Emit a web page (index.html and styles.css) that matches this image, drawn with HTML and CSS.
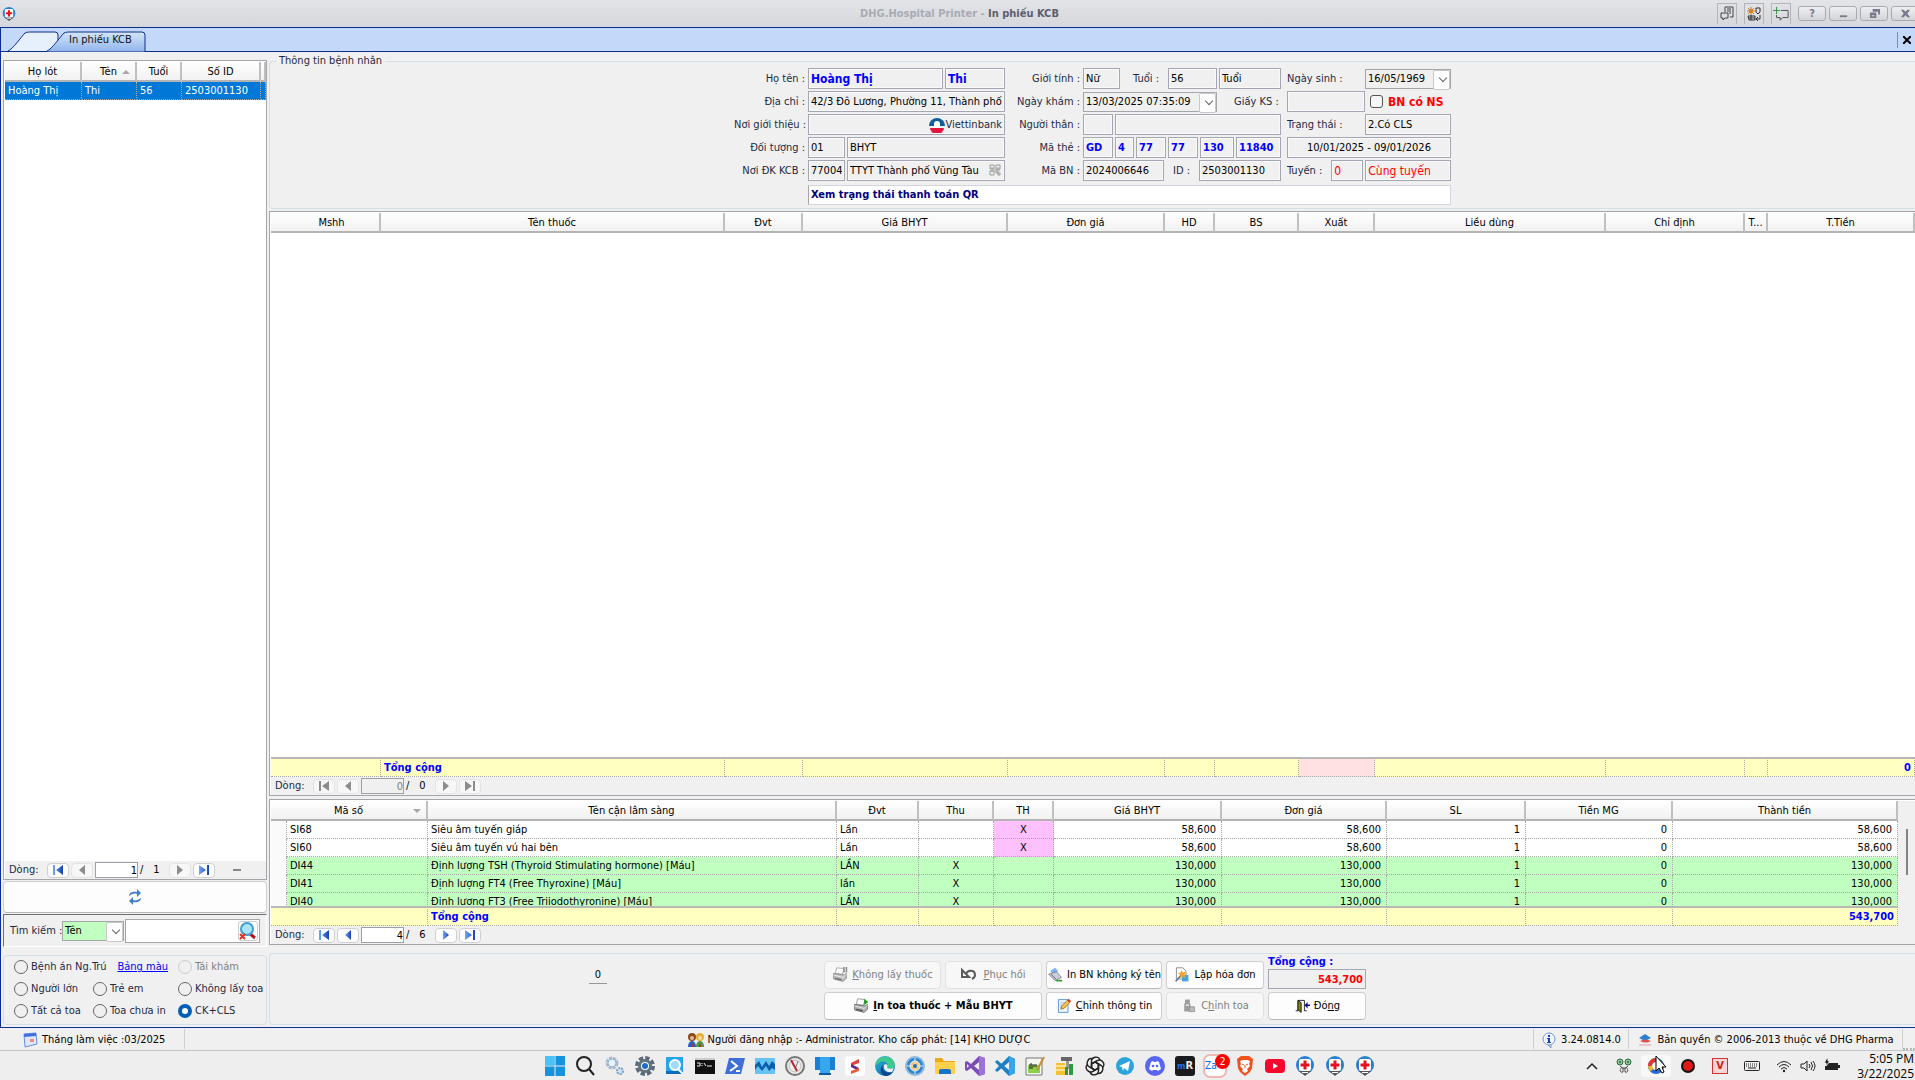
FILE: index.html
```html
<!DOCTYPE html>
<html lang="vi">
<head>
    <meta charset="UTF-8">
    <meta name="viewport" content="width=device-width, initial-scale=1.0">
    <title>DHG.Hospital Printer - In phiếu KCB</title>
    <link rel="stylesheet" href="styles.css">
</head>
<body>
    <svg class="defs" aria-hidden="true">
        <defs>
            <linearGradient id="blueArrow" x1="0" x2="1"><stop offset="0" stop-color="#6fa8f5"/><stop offset="1" stop-color="#1440b4"/></linearGradient>
            <linearGradient id="edgeFill" x1="0" y1="0" x2="1" y2="1"><stop offset="0" stop-color="#2bb7e0"/><stop offset="1" stop-color="#0c59a4"/></linearGradient>
            <symbol id="first" viewBox="0 0 14 12"><path d="M2 1h2v10H2zM12 1v10L5 6z"/></symbol>
            <symbol id="prev" viewBox="0 0 14 12"><path d="M10 1v10L4 6z"/></symbol>
            <symbol id="next" viewBox="0 0 14 12"><path d="M4 1v10l6-5z"/></symbol>
            <symbol id="last" viewBox="0 0 14 12"><path d="M2 1v10l7-5zM10 1h2v10h-2z"/></symbol>
            <symbol id="hospital" viewBox="0 0 20 20">
                <circle cx="10" cy="9" r="9" fill="#2a7fd0"/>
                <path d="M4 15l6 5 6-5z" fill="#555"/>
                <rect x="4" y="3" width="12" height="12" rx="2" fill="#fff"/>
                <path d="M8.500 4.500h3v3h3v3h-3v3h-3v-3h-3v-3h3z" fill="#e8101c"/>
                <path d="M7 16h6v1H7z" fill="#fff"/>
            </symbol>
            <symbol id="printer" viewBox="0 0 20 20">
                <path d="M6 1l9 1-2 7-9-1z" fill="#fff" stroke="#888"/>
                <path d="M2 8l13 2 3-2v6l-4 4-12-3z" fill="#b5b5b5" stroke="#666"/>
                <path d="M2 10l12 3 4-4" fill="none" stroke="#eee"/>
                <path d="M4 14l8 2" stroke="#555" stroke-width="2"/>
            </symbol>
        </defs>
    </svg>

    <header class="titlebar">
        <svg class="app-icon"><use href="#hospital"/></svg>
        <h1><span>DHG.Hospital Printer - </span>In phiếu KCB</h1>
        <div class="window-tools">
            <button class="tool" aria-label="Chat">
                <svg viewBox="0 0 16 16"><path d="M6 6V1h8v10h-3M8 3h4M8 5h4M10 7h2M2 7h7v5H6l-2 2v-2H2z" fill="none" stroke="#444"/></svg>
            </button>
            <button class="tool" aria-label="Ngôn ngữ">
                <svg viewBox="0 0 16 16"><path d="M5 1v8M1 5h8M2 2l6 6M8 2L2 8" stroke="#d08020"/><circle cx="5" cy="5" r="2" fill="#d08020"/><path d="M2 10h7v4H3zM2 12h7M5 9v5M10 2h4v4l-2 2-2-2zM14 9v4h-3M12 11l-2 2 2 2" fill="none" stroke="#333"/></svg>
            </button>
            <button class="tool" aria-label="Ghi chú">
                <svg viewBox="0 0 18 16"><path d="M4 0v8M0 4h8" stroke="#2c8a3a"/><path d="M9 4h8v8h-6l-3 3v-3H4V9" fill="none" stroke="#444"/></svg>
            </button>
            <button class="win" aria-label="Trợ giúp">?</button>
            <button class="win" aria-label="Thu nhỏ"><svg viewBox="0 0 12 12"><path d="M2 8h8v2H2z"/></svg></button>
            <button class="win" aria-label="Khôi phục"><svg viewBox="0 0 12 12"><path d="M4 1h8v6h-2V4H4zM1 5h7v6H1zM3 8v1h3V8z" fill-rule="evenodd"/></svg></button>
            <button class="win" aria-label="Thoát"><svg viewBox="0 0 12 12"><path d="M1 2h3l2 2 2-2h3L8 6l3 4H8L6 8l-2 2H1l3-4z"/></svg></button>
        </div>
    </header>

    <nav class="tabs">
        <svg class="tab-shapes" viewBox="0 0 146 24">
            <defs>
                <linearGradient id="tabOn" x1="0" y1="0" x2="0" y2="1"><stop offset="0" stop-color="#d5e5fa"/><stop offset="1" stop-color="#8fb4ea"/></linearGradient>
            </defs>
            <path d="M7 23C12 21 20 9 24 5c2-1 4-1 6-1h24q3 0 3 3v16" fill="#e6effc" stroke="#0a2f8c"/>
            <path d="M46 23C51 21 59 9 63 5c2-1 4-1 6-1h72q3 0 3 3v17H46z" fill="url(#tabOn)" stroke="#0a2f8c"/>
        </svg>
        <a class="tab-label" href="#">In phiếu KCB</a>
        <button class="tab-close" aria-label="Đóng tab"><svg viewBox="0 0 8 8"><path d="M0 0l8 8M8 0L0 8" stroke="#000" stroke-width="2"/></svg></button>
    </nav>

    <main class="workspace">
        <aside class="sidebar">
            <div class="grid-panel patients">
                <table>
                    <colgroup><col class="w77"><col class="w55"><col class="w45"><col class="w79"><col></colgroup>
                    <thead>
                        <tr><th>Họ lót</th><th>Tên<i class="sort up"></i></th><th>Tuổi</th><th>Số ID</th><th></th></tr>
                    </thead>
                    <tbody>
                        <tr class="selected"><td>Hoàng Thị</td><td>Thi</td><td>56</td><td>2503001130</td><td></td></tr>
                    </tbody>
                </table>
                <div class="blank"></div>
                <div class="pager">
                    <label for="row1">Dòng:</label>
                    <button aria-label="Đầu"><svg><use href="#first"/></svg></button>
                    <button disabled aria-label="Trước"><svg><use href="#prev"/></svg></button>
                    <input type="text" id="row1" value="1">
                    <span>/</span><span class="count">1</span>
                    <button disabled aria-label="Sau"><svg><use href="#next"/></svg></button>
                    <button aria-label="Cuối"><svg><use href="#last"/></svg></button>
                    <i class="dash"></i>
                </div>
            </div>
            <button class="btn refresh" aria-label="Làm mới">
                <svg viewBox="0 0 16 16"><path d="M2 7c0-4 5-5 8-4V0l4 4-4 4V5C7 4 5 5 2 7zM14 9c0 4-5 5-8 4v3l-4-4 4-4v3c3 1 5 0 8-2z" fill="#3f7fd0"/></svg>
            </button>
            <div class="search">
                <label for="field">Tìm kiếm :</label>
                <span class="combo green"><select id="field"><option>Tên</option></select></span>
                <span class="search-box">
                    <input type="text" aria-label="Từ khóa">
                    <button aria-label="Xóa tìm kiếm">
                        <svg viewBox="0 0 18 18"><path d="M10 11l6 5" stroke="#b01818" stroke-width="3"/><circle cx="8" cy="7" r="6" fill="#a8e4f8" stroke="#3f9bd0" stroke-width="2"/><path d="M1 12l5 5M6 12l-5 5" stroke="#e03020" stroke-width="2"/></svg>
                    </button>
                </span>
            </div>
            <fieldset class="filters">
                <label><input type="radio" name="filter">Bệnh án Ng.Trú</label>
                <a href="#">Bảng màu</a>
                <label class="off"><input type="radio" name="filter" disabled>Tái khám</label>
                <label><input type="radio" name="filter">Người lớn</label>
                <label><input type="radio" name="filter">Trẻ em</label>
                <label><input type="radio" name="filter">Không lấy toa</label>
                <label><input type="radio" name="filter">Tất cả toa</label>
                <label><input type="radio" name="filter">Toa chưa in</label>
                <label><input type="radio" name="filter" checked>CK+CLS</label>
            </fieldset>
        </aside>

        <section class="content">
            <fieldset class="patient-info">
                <legend>Thông tin bệnh nhân</legend>
                <div class="info-grid">
                    <label for="hoten">Họ tên :</label>
                    <div class="fields">
                        <input class="name grow" id="hoten" value="Hoàng Thị" readonly>
                        <input class="name f59" value="Thi" aria-label="Tên" readonly>
                    </div>
                    <label for="gioitinh">Giới tính :</label>
                    <div class="fields">
                        <input class="f36" id="gioitinh" value="Nữ" readonly>
                        <label class="grow" for="tuoi">Tuổi :</label>
                        <input class="f49" id="tuoi" value="56" readonly>
                        <input class="f62" value="Tuổi" aria-label="Đơn vị tuổi" readonly>
                    </div>
                    <div class="fields third">
                        <label class="grow" for="ngaysinh">Ngày sinh :</label>
                        <span class="combo f86"><select id="ngaysinh"><option>16/05/1969</option></select></span>
                    </div>

                    <label for="diachi">Địa chỉ :</label>
                    <div class="fields"><input class="grow" id="diachi" value="42/3 Đô Lương, Phường 11, Thành phố" readonly></div>
                    <label for="ngaykham">Ngày khám :</label>
                    <div class="fields">
                        <span class="combo f134"><select id="ngaykham"><option>13/03/2025 07:35:09</option></select></span>
                        <label class="ks" for="giayks">Giấy KS :</label>
                    </div>
                    <div class="fields third">
                        <input class="f78" id="giayks" readonly>
                        <label class="newborn"><input type="checkbox">BN có NS</label>
                    </div>

                    <label for="noigt">Nơi giới thiệu :</label>
                    <div class="fields bank">
                        <input class="grow" id="noigt" value="Viettinbank" readonly>
                        <svg viewBox="0 0 16 16"><path d="M0 9a8 8 0 0 1 16 0z" fill="#0f5f9f"/><path d="M1 11a7 6 0 0 0 14 0z" fill="#e3173e"/><path d="M8 4a3 3 0 0 1 3 3v2l2 2H3l2-2V7a3 3 0 0 1 3-3z" fill="#fff"/></svg>
                    </div>
                    <label for="nguoithan">Người thân :</label>
                    <div class="fields"><input class="f30" id="nguoithan" readonly><input class="grow" aria-label="Tên người thân" readonly></div>
                    <div class="fields third">
                        <label class="grow" for="trangthai">Trạng thái :</label>
                        <input class="f86" id="trangthai" value="2.Có CLS" readonly>
                    </div>

                    <label for="doituong">Đối tượng :</label>
                    <div class="fields"><input class="f36" id="doituong" value="01" readonly><input class="grow" value="BHYT" aria-label="Loại" readonly></div>
                    <label for="mathe">Mã thẻ :</label>
                    <div class="fields card">
                        <input class="f30" id="mathe" value="GD" readonly>
                        <input class="f19" value="4" aria-label="Mã thẻ 2" readonly>
                        <input class="f30" value="77" aria-label="Mã thẻ 3" readonly>
                        <input class="f30" value="77" aria-label="Mã thẻ 4" readonly>
                        <input class="f34" value="130" aria-label="Mã thẻ 5" readonly>
                        <input class="grow" value="11840" aria-label="Mã thẻ 6" readonly>
                    </div>
                    <div class="fields third"><input class="grow center" value="10/01/2025 - 09/01/2026" aria-label="Hạn thẻ" readonly></div>

                    <label for="noidk">Nơi ĐK KCB :</label>
                    <div class="fields qr">
                        <input class="f36" id="noidk" value="77004" readonly>
                        <input class="grow" value="TTYT Thành phố Vũng Tàu" aria-label="Tên nơi ĐK" readonly>
                        <svg viewBox="0 0 12 12"><path d="M1 1h4v4H1zM7 1h4v4H7zM1 7h4v4H1zM7 7h2v2H7zM9 9h2v2H9zM3 3v5M9 3v2M5 6h6" fill="none" stroke="#999"/></svg>
                    </div>
                    <label for="mabn">Mã BN :</label>
                    <div class="fields">
                        <input class="f80" id="mabn" value="2024006646" readonly>
                        <label class="grow" for="idbn">ID :</label>
                        <input class="f82" id="idbn" value="2503001130" readonly>
                    </div>
                    <div class="fields third">
                        <label class="grow" for="tuyen">Tuyến :</label>
                        <input class="red f32" id="tuyen" value="0" readonly>
                        <input class="red f86" value="Cùng tuyến" aria-label="Tên tuyến" readonly>
                    </div>

                    <a class="qr-link" href="#">Xem trạng thái thanh toán QR</a>
                </div>
            </fieldset>

            <div class="grid-panel drugs">
                <table>
                    <colgroup><col class="w110"><col class="w344"><col class="w78"><col class="w205"><col class="w157"><col class="w50"><col class="w84"><col class="w76"><col class="w231"><col class="w139"><col class="w23"><col></colgroup>
                    <thead>
                        <tr><th class="indent">Mshh</th><th>Tên thuốc</th><th>Đvt</th><th>Giá BHYT</th><th>Đơn giá</th><th>HD</th><th>BS</th><th>Xuất</th><th>Liều dùng</th><th>Chỉ định</th><th>T...</th><th>T.Tiền</th></tr>
                    </thead>
                    <tbody><tr><td colspan="12"></td></tr></tbody>
                    <tfoot>
                        <tr><td></td><td>Tổng cộng</td><td></td><td></td><td></td><td></td><td></td><td class="rose"></td><td></td><td></td><td></td><td class="num">0</td></tr>
                    </tfoot>
                </table>
                <div class="pager">
                    <label for="row2">Dòng:</label>
                    <button disabled aria-label="Đầu"><svg><use href="#first"/></svg></button>
                    <button disabled aria-label="Trước"><svg><use href="#prev"/></svg></button>
                    <input type="text" id="row2" value="0" disabled>
                    <span>/</span><span class="count">0</span>
                    <button disabled aria-label="Sau"><svg><use href="#next"/></svg></button>
                    <button disabled aria-label="Cuối"><svg><use href="#last"/></svg></button>
                </div>
            </div>

            <div class="grid-panel tests">
                <div class="test-area">
                    <div class="test-tables">
                        <div class="test-rows">
                            <table>
                                <colgroup><col class="w16"><col class="w141"><col class="w409"><col class="w82"><col class="w75"><col class="w60"><col class="w168"><col class="w165"><col class="w139"><col class="w147"><col></colgroup>
                                <thead>
                                    <tr><th colspan="2">Mã số<i class="sort down"></i></th><th>Tên cận lâm sàng</th><th>Đvt</th><th>Thu</th><th>TH</th><th>Giá BHYT</th><th>Đơn giá</th><th>SL</th><th>Tiền MG</th><th>Thành tiền</th></tr>
                                </thead>
                                <tbody>
                                    <tr><td></td><td>SI68</td><td>Siêu âm tuyến giáp</td><td>Lần</td><td></td><td class="pink">X</td><td>58,600</td><td>58,600</td><td>1</td><td>0</td><td>58,600</td></tr>
                                    <tr><td></td><td>SI60</td><td>Siêu âm tuyến vú hai bên</td><td>Lần</td><td></td><td class="pink">X</td><td>58,600</td><td>58,600</td><td>1</td><td>0</td><td>58,600</td></tr>
                                    <tr class="lime"><td></td><td>DI44</td><td>Định lượng TSH (Thyroid Stimulating hormone) [Máu]</td><td>LẦN</td><td>X</td><td></td><td>130,000</td><td>130,000</td><td>1</td><td>0</td><td>130,000</td></tr>
                                    <tr class="lime"><td></td><td>DI41</td><td>Định lượng FT4 (Free Thyroxine) [Máu]</td><td>lần</td><td>X</td><td></td><td>130,000</td><td>130,000</td><td>1</td><td>0</td><td>130,000</td></tr>
                                    <tr class="lime"><td></td><td>DI40</td><td>Định lượng FT3 (Free Triiodothyronine) [Máu]</td><td>LẦN</td><td>X</td><td></td><td>130,000</td><td>130,000</td><td>1</td><td>0</td><td>130,000</td></tr>
                                </tbody>
                            </table>
                        </div>
                        <table class="totals">
                            <colgroup><col class="w16"><col class="w141"><col class="w409"><col class="w82"><col class="w75"><col class="w60"><col class="w168"><col class="w165"><col class="w139"><col class="w147"><col></colgroup>
                            <tfoot>
                                <tr><td colspan="2"></td><td>Tổng cộng</td><td></td><td></td><td></td><td></td><td></td><td></td><td></td><td class="num">543,700</td></tr>
                            </tfoot>
                        </table>
                    </div>
                    <div class="scrollbar"><i></i></div>
                </div>
                <div class="pager">
                    <label for="row3">Dòng:</label>
                    <button aria-label="Đầu"><svg><use href="#first"/></svg></button>
                    <button aria-label="Trước"><svg><use href="#prev"/></svg></button>
                    <input type="text" id="row3" value="4">
                    <span>/</span><span class="count">6</span>
                    <button aria-label="Sau"><svg><use href="#next"/></svg></button>
                    <button aria-label="Cuối"><svg><use href="#last"/></svg></button>
                </div>
            </div>

            <div class="actions">
                <span class="counter">0</span>
                <div class="action-grid">
                    <button class="btn" disabled><svg viewBox="0 0 20 20"><use href="#printer"/><path d="M15 0v7M18 0v7" stroke="#777" stroke-width="2"/></svg><span><u>K</u>hông lấy thuốc</span></button>
                    <button class="btn undo" disabled><svg viewBox="0 0 16 16"><path d="M1 3v7h7zM5 7c2-5 9-4 9 1 0 2-1 3-3 4" fill="none" stroke="#333" stroke-width="2"/></svg><span><u>P</u>hục hồi</span></button>
                    <button class="btn"><svg viewBox="0 0 20 20"><path d="M4 5l6-4 4 4-6 5z" fill="#7db4f0"/><path d="M2 9l10-3 6 7-8 4z" fill="#c9cdd8" stroke="#778"/><path d="M10 16h9v2h-7z" fill="#3a9a3a"/><path d="M5 9l6 6" stroke="#447"/></svg><span>In BN không ký tên</span></button>
                    <button class="btn"><svg viewBox="0 0 20 20"><path d="M3 1h8l4 4v10H3z" fill="#fff" stroke="#777"/><path d="M10 10h8v8h-8z" fill="#49a4dc"/><path d="M2 18l8-9" stroke="#777" stroke-width="2"/><path d="M9 4l2 3 4-1-2 4 2 3-4-1-3 2V10L5 8l3-1z" fill="#f2a326"/></svg><span>Lập hóa đơn</span></button>
                    <div class="total">
                        <label for="total">Tổng cộng :</label>
                        <input id="total" value="543,700" readonly>
                    </div>
                    <button class="btn primary"><svg viewBox="0 0 20 20"><use href="#printer"/><path d="M14 1l5 4-5 4z" fill="#1c9a1c"/></svg><span><u>I</u>n toa thuốc + Mẫu BHYT</span></button>
                    <button class="btn"><svg viewBox="0 0 20 20"><path d="M3 2h12v16H3z" fill="#eef6ff" stroke="#3c84c8"/><path d="M5 6h7M5 9h6M5 12h7" stroke="#8ab4dc"/><path d="M6 14l1-4 7-7 3 3-7 7z" fill="#f6c14a" stroke="#a66a20"/><path d="M14 3l2-2 3 3-2 2z" fill="#d83a2a"/></svg><span><u>C</u>hỉnh thông tin</span></button>
                    <button class="btn" disabled><svg viewBox="0 0 20 20"><path d="M5 2h6v4l1 3v8H4V8l1-2z" fill="#888"/><path d="M11 11h6v6h-7z" fill="#aaa" stroke="#777"/><path d="M6 9h4" stroke="#ddd" stroke-width="2"/></svg><span>C<u>h</u>ỉnh toa</span></button>
                    <button class="btn"><svg viewBox="0 0 20 20"><path d="M5 16V3h8v13h3M2 16h3" fill="none" stroke="#000"/><path d="M5 3l4 3v12l-4-3z" fill="#8a8a1a" stroke="#000"/><path d="M13 9l4-4v3h3v2h-3v3z" fill="#10108c"/></svg><span>Đó<u>ng</u></span></button>
                </div>
            </div>
        </section>
    </main>

    <footer class="statusbar">
        <div class="cell month">
            <svg viewBox="0 0 16 16"><path d="M2 2l12-1 1 11-12 3z" fill="#dfe8fb" stroke="#6a8fe0"/><path d="M2 2l12-1v3L2 5z" fill="#3f6fe0"/><path d="M8 7h4v3H8z" fill="#f08a80"/></svg>
            Tháng làm việc :03/2025
        </div>
        <div class="cell user">
            <svg viewBox="0 0 16 16"><circle cx="4" cy="5" r="4" fill="#8a4a20"/><path d="M0 15c0-8 8-8 8 0z" fill="#2f5fc0"/><circle cx="12" cy="5" r="4" fill="#e8b030"/><path d="M8 15c0-8 8-8 8 0z" fill="#4a9a4a"/><circle cx="4" cy="6" r="2" fill="#e8b890"/><circle cx="12" cy="6" r="2" fill="#f6d8a8"/><path d="M4 10l1 5H3zM12 10l1 5h-2z" fill="#d02020"/></svg>
            Người đăng nhập :- Administrator. Kho cấp phát: [14] KHO DƯỢC
        </div>
        <div class="cell version">
            <svg viewBox="0 0 16 16"><path d="M8 1a6 6 0 1 1-1 12l3 3V13" fill="#e8f2ff" stroke="#7a9ac8"/><circle cx="8" cy="7" r="6" fill="#eef5ff" stroke="#7a9ac8"/><path d="M7 3h2v2H7zM6 6h3v4h1v1H6v-1h1V7H6z" fill="#1040c0"/></svg>
            3.24.0814.0
        </div>
        <div class="cell rights">
            <svg viewBox="0 0 16 16"><path d="M8 2l6 4-6 3-6-3z" fill="#2f7fd0"/><path d="M3 9q5-3 11 0-5 3-11 0z" fill="#e05050"/><path d="M2 13h12" stroke="#e0a0a0"/></svg>
            Bản quyền © 2006-2013 thuộc về DHG Pharma
        </div>
        <i class="grip"></i>
    </footer>

    <div class="taskbar">
        <div class="task-icons">
            <svg viewBox="0 0 20 20"><path d="M0 0h9.500v9.500H0zM10.500 0H20v9.500h-9.500zM0 10.500h9.500V20H0zM10.500 10.500H20V20h-9.500z" fill="#1793dc"/><path d="M0 0h9.500v9.500H0z" fill="#4cc2f5"/></svg>
            <svg viewBox="0 0 20 20"><circle cx="9" cy="8" r="7" fill="none" stroke="#222" stroke-width="2"/><path d="M14 13l5 6" stroke="#222" stroke-width="2"/></svg>
            <svg viewBox="0 0 20 20"><circle cx="7" cy="7" r="5" fill="none" stroke="#a9bccd" stroke-width="3" stroke-dasharray="3 1"/><circle cx="7" cy="7" r="4" fill="#e7f2fb" stroke="#8fb0cc"/><circle cx="15" cy="15" r="3" fill="#cfe3f4" stroke="#7ea3c4" stroke-width="2" stroke-dasharray="2 1"/></svg>
            <svg viewBox="0 0 20 20"><circle cx="10" cy="10" r="8" fill="none" stroke="#5d6b78" stroke-width="4" stroke-dasharray="4.200 2.080"/><circle cx="10" cy="10" r="7" fill="#64727f"/><circle cx="10" cy="10" r="4" fill="#fff"/><circle cx="10" cy="10" r="3" fill="#1670c8"/></svg>
            <svg viewBox="0 0 20 20"><path d="M1 1h17v17H1z" fill="#27a5ec"/><path d="M1 15h17v3H1z" fill="#0d6db8"/><circle cx="10" cy="9" r="5" fill="#9fdcfb" stroke="#fff" stroke-width="2"/><path d="M13 13l5 5" stroke="#fff" stroke-width="2"/></svg>
            <svg viewBox="0 0 20 20"><path d="M0 2h20v16H0z" fill="#111"/><path d="M0 2h20v2H0z" fill="#ccc"/><path d="M2 7h3v3H2M7 7v1M7 9v1M9 7l2 3M12 10h5" fill="none" stroke="#eee"/></svg>
            <svg viewBox="0 0 20 20"><path d="M4 2h16l-4 16H0z" fill="#3e6fd8"/><path d="M6 5l6 5-7 5M11 15h4" fill="none" stroke="#fff" stroke-width="2"/></svg>
            <svg viewBox="0 0 20 20"><path d="M0 2h20v16H0z" fill="#67c3f2"/><path d="M0 9l4-4 3 6 4-6 3 5 3-5 3 3v6l-3-2-3 3-3-5-4 5-4-5-3 4z" fill="#0a5fae"/></svg>
            <svg viewBox="0 0 20 20"><circle cx="10" cy="10" r="9" fill="#eee" stroke="#777" stroke-width="2"/><circle cx="10" cy="10" r="6" fill="none" stroke="#bbb"/><path d="M6 4l6 11" stroke="#b02a2a" stroke-width="2"/><path d="M13 5l-2 6" stroke="#777"/></svg>
            <svg viewBox="0 0 20 20"><path d="M0 1h20v13H0z" fill="#1a7fd0"/><path d="M5 1h10v17H5z" fill="#35a7ee"/><path d="M4 17h12v2H4z" fill="#0d5a9c"/></svg>
            <svg viewBox="0 0 20 20"><rect width="20" height="20" rx="4" fill="#fff"/><path d="M14 3L6 7v3l8-3z" fill="#e8413c"/><path d="M6 8l8 4v3L6 11z" fill="#5b2a86"/><path d="M14 12l-8 3v3l8-3z" fill="#f25a3c"/></svg>
            <svg viewBox="0 0 20 20"><circle cx="10" cy="10" r="10" fill="url(#edgeFill)"/><path d="M1 6c4-8 18-7 19 3 0 4-5 5-8 3 3-4-2-8-7-6-2 1-4 3-5 5z" fill="#3fc98e"/><path d="M8 9c-2 6 4 9 9 7 2-1 0 3-5 4C5 20 4 12 8 9z" fill="#0b478c"/><path d="M9 9c2-2 5 0 3 3 2 1 5 1 7 0l-2 4c-5 1-9-2-8-7z" fill="#eef"/></svg>
            <svg viewBox="0 0 20 20"><circle cx="10" cy="10" r="9" fill="#2f86cf" stroke="#8fb9dc" stroke-width="2"/><circle cx="10" cy="10" r="5" fill="#f1c77a" stroke="#e8eef4"/><path d="M10 2v16M2 10h16" stroke="#dbe8f4"/><circle cx="10" cy="10" r="2" fill="#2f6fae"/></svg>
            <svg viewBox="0 0 20 20"><path d="M0 2h7l2 3h11v13H0z" fill="#eba91a"/><path d="M0 6h20v12H0z" fill="#fccf4d"/><path d="M4 18v-3q0-2 2-2h8q2 0 2 2v3z" fill="#1673c8"/></svg>
            <svg viewBox="0 0 20 20"><path d="M14 0l6 2v16l-6 2L6 12l-4 3-2-1V6l2-1 4 3z" fill="#7b4bb8"/><path d="M14 6v8l-5-4zM2 8v4l2-2z" fill="#eee"/><path d="M14 0l6 2v16l-6 2z" fill="#9b72d6"/></svg>
            <svg viewBox="0 0 20 20"><path d="M14 0l6 3v14l-6 3L2 8 0 6l2-2 12 10V6L2 16l-2-2z" fill="#1d7fc4"/><path d="M14 0l6 3v14l-6 3z" fill="#37a5ec"/></svg>
            <svg viewBox="0 0 20 20"><path d="M1 2h16v17H1z" fill="#f5f7f0" stroke="#777"/><path d="M3 9h12v8H3z" fill="#8ccf4a"/><path d="M5 13V8h2v5M9 8v3M11 8v3" fill="none" stroke="#222"/><path d="M19 1l-7 13" stroke="#c89030" stroke-width="2"/></svg>
            <svg viewBox="0 0 20 20"><path d="M1 7h9v12H1z" fill="#f2c233"/><path d="M1 10h9M1 14h9" stroke="#fff"/><path d="M6 1h11v4H6z" fill="#666"/><path d="M11 5h3v8h-3z" fill="#999"/><path d="M10 11h3v8h-3zM14 8h4v11h-4z" fill="#2c9a3a"/></svg>
            <svg viewBox="0 0 20 20" fill="none" stroke="#222" stroke-width="1.400"><path id="petal" d="M6.500 12V5.500c0-5 7-6 8.500-1.500M6.500 8L10 6l5 3"/><use href="#petal" transform="rotate(60 10 10)"/><use href="#petal" transform="rotate(120 10 10)"/><use href="#petal" transform="rotate(180 10 10)"/><use href="#petal" transform="rotate(240 10 10)"/><use href="#petal" transform="rotate(300 10 10)"/></svg>
            <svg viewBox="0 0 20 20"><circle cx="10" cy="10" r="9" fill="#2da3dc"/><path d="M4 10l11-5-2 10-4-3-1 3-1-4z" fill="#fff"/></svg>
            <svg viewBox="0 0 20 20"><circle cx="10" cy="10" r="10" fill="#5865f2"/><path d="M6 6l2-1 1 1h2l1-1 2 1 2 7-3 2-1-1H8l-1 1-3-2z" fill="#fff"/><circle cx="8" cy="10" r="1.300" fill="#5865f2"/><circle cx="12" cy="10" r="1.300" fill="#5865f2"/></svg>
            <span class="mr"><b>m</b>R</span>
            <span class="zalo">Za<b>2</b></span>
            <svg viewBox="0 0 20 20"><path d="M6 0h8l4 3-1 9-2 4-5 4-5-4-2-4-1-9z" fill="#f4501e"/><path d="M5 5l3-1h4l3 1-1 3 1 2-3 3 1 2-3 2-3-2 1-2-3-3 1-2z" fill="#fff"/><path d="M7 8l2 1M13 8l-2 1M10 9v3" stroke="#f4501e"/></svg>
            <svg viewBox="0 0 20 20"><rect y="3" width="20" height="14" rx="4" fill="#f8062e"/><path d="M8 7v6l5-3z" fill="#fff"/></svg>
            <svg><use href="#hospital"/></svg>
            <svg><use href="#hospital"/></svg>
            <svg><use href="#hospital"/></svg>
        </div>
        <div class="tray">
            <svg viewBox="0 0 16 16"><path d="M3 11l5-5 5 5" fill="none" stroke="#222" stroke-width="1.500"/></svg>
            <svg viewBox="0 0 16 16"><circle cx="4" cy="4" r="3" fill="#8fc49a" stroke="#2c6a3c"/><circle cx="12" cy="4" r="3" fill="#8fc49a" stroke="#2c6a3c"/><circle cx="4" cy="4" r="1" fill="#2c6a3c"/><circle cx="12" cy="4" r="1" fill="#2c6a3c"/><path d="M4 8l4 3 4-3M6 9c-3 3-2 6 1 5V9M10 9c3 3 2 6-1 5V9" fill="none" stroke="#555"/></svg>
            <span class="tray-app">
                <svg viewBox="0 0 16 16"><circle cx="8" cy="8" r="6" fill="none" stroke="#2869d8" stroke-width="4"/><path d="M2 8a6 6 0 0 1 6-6" fill="none" stroke="#e8382c" stroke-width="4"/><path d="M8 2a6 6 0 0 1 5 3" fill="none" stroke="#28a048" stroke-width="4"/><path d="M2 8a6 6 0 0 0 2 4" fill="none" stroke="#f4b820" stroke-width="4"/></svg>
                <svg class="cursor" viewBox="0 0 12 19"><path d="M1 1v15l3-3 3 5 2-1-2-5h4z" fill="#fff" stroke="#000"/></svg>
            </span>
            <svg viewBox="0 0 16 16"><circle cx="8" cy="8" r="7" fill="#111"/><circle cx="8" cy="8" r="5" fill="#e01818"/></svg>
            <span class="vkey">V</span>
            <svg viewBox="0 0 16 16"><rect x="0.500" y="3.500" width="15" height="9" rx="1" fill="none" stroke="#222"/><path d="M2 6h12M2 8h12" stroke="#222" stroke-dasharray="1 1"/><path d="M4 10h8" stroke="#222"/></svg>
            <svg viewBox="0 0 16 16"><path d="M1 7q7-7 14 0M3 9q5-5 10 0M5 11q3-3 6 0" fill="none" stroke="#222"/><circle cx="8" cy="13" r="1.200" fill="#222"/></svg>
            <svg class="sound" viewBox="0 0 16 16"><path d="M1 6h3l3-3v10L4 10H1zM9 6q2 2 0 4M11 4q3 4 0 8M13 3q4 5 0 10" fill="none" stroke="#222"/></svg>
            <svg class="battery" viewBox="0 0 16 16"><path d="M3 5h11v2h2v3h-2v2H1V8h2z" fill="#222"/><path d="M3 0L0 5h2v3l4-5H4V0z" fill="#222" stroke="#eee"/></svg>
            <div class="clock">5:05 PM<br>3/22/2025</div>
        </div>
    </div>
</body>
</html>
```

FILE: styles.css
```css
* {
    box-sizing: border-box;
}

body {
    margin: 0;
    height: 100vh;
    display: flex;
    flex-direction: column;
    overflow: hidden;
    background-color: #f0f0f0;
    color: #000;
    font-family: "DejaVu Sans Condensed", "Noto Sans", sans-serif;
    font-size: 11px;
    line-height: 14px;
}

button, input, select {
    font: inherit;
    color: inherit;
    margin: 0;
    padding: 0;
    border-radius: 0;
    min-width: 0;
}

label {
    color: #1e2a44;
    white-space: nowrap;
}

.defs {
    position: absolute;
    width: 0;
    height: 0;
}

/* title bar */
.titlebar {
    height: 27px;
    flex: none;
    display: grid;
    grid-template-columns: 1fr auto 1fr;
    align-items: center;
    background: linear-gradient(#e3e4e8, #d6d7dc);
}

.app-icon {
    width: 14px;
    height: 14px;
    margin-left: 2px;
}

h1 {
    margin: 0;
    padding: 1px 0 0 4px;
    font-size: 11px;
    color: #5b5e70;
}

h1 span {
    color: #a9abb4;
}

.window-tools {
    display: flex;
    justify-content: flex-end;
    align-items: center;
    gap: 3px;
    margin-right: -4px;
}

.tool {
    width: 20px;
    height: 21px;
    margin-right: 4px;
    border: 1px solid #b4b5ba;
    border-width: 1px 1px 0;
    background: none;
}

.tool svg {
    display: block;
    width: 16px;
    height: 16px;
    margin: auto;
}

.win {
    width: 28px;
    height: 15px;
    border: 1px solid #a9abb3;
    border-radius: 3px;
    background: linear-gradient(#eeeff2, #d3d4d9);
    color: #777b8c;
    font-weight: bold;
    line-height: 12px;
}

.win svg {
    display: block;
    width: 11px;
    height: 11px;
    margin: auto;
    fill: #777b8c;
}

/* tabs */
.tabs {
    height: 25px;
    flex: none;
    display: flex;
    align-items: center;
    position: relative;
    border: 1px solid #0a2f8c;
    border-right: 0;
    background-color: #c4d9fa;
}

.tab-shapes {
    width: 146px;
    height: 24px;
    flex: none;
}

.tab-label {
    position: absolute;
    left: 68px;
    top: 5px;
    color: #111;
    text-decoration: none;
}

.tab-close {
    margin-left: auto;
    width: 18px;
    height: 16px;
    border: 0;
    border-left: 1px solid #6c93d0;
    background: none;
}

.tab-close svg {
    display: block;
    width: 8px;
    height: 8px;
    margin: auto;
}

/* workspace */
.workspace {
    flex: 1;
    min-height: 0;
    display: flex;
    gap: 2px;
    border-left: 1px solid #0a2f8c;
    border-bottom: 1px solid #0a2f8c;
}

.sidebar {
    width: 266px;
    flex: none;
    display: flex;
    flex-direction: column;
    padding: 8px 0 2px 2px;
}

.content {
    flex: 1;
    min-width: 0;
    display: flex;
    flex-direction: column;
    padding: 2px 0;
}

.grid-panel {
    border: 1px solid #a5a6ac;
    padding: 1px 0 0 1px;
    background-color: #fff;
    display: flex;
    flex-direction: column;
}

table {
    width: 100%;
    table-layout: fixed;
    border-collapse: separate;
    border-spacing: 0;
}

th {
    position: relative;
    height: 20px;
    padding: 2px 2px 0;
    font-weight: normal;
    background: linear-gradient(#fff, #f1f1f1);
    border-right: 2px solid #c0c0c0;
    border-bottom: 2px solid #b4b4b4;
    white-space: nowrap;
    overflow: hidden;
}

th.indent {
    padding-left: 15px;
}

td {
    height: 18px;
    padding: 0 3px;
    border-right: 1px dotted #a8a8a8;
    border-bottom: 1px dotted #a8a8a8;
    white-space: nowrap;
    overflow: hidden;
}

.sort {
    position: absolute;
    right: 5px;
    top: 8px;
    border: 4px solid transparent;
}

.sort.up {
    border-top: 0;
    border-bottom-color: #a8a8a8;
}

.sort.down {
    border-bottom: 0;
    border-top-color: #a8a8a8;
}

.selected td {
    background-color: #0078d7;
    color: #fff;
}

tfoot td {
    background-color: #ffffc0;
    color: #00f;
    font-weight: bold;
}

td.num {
    text-align: right;
}

td.rose {
    background-color: #ffe1e1;
}

.w16 { width: 16px; }
.w23 { width: 23px; }
.w45 { width: 45px; }
.w50 { width: 50px; }
.w55 { width: 55px; }
.w60 { width: 60px; }
.w75 { width: 75px; }
.w76 { width: 76px; }
.w77 { width: 77px; }
.w78 { width: 78px; }
.w79 { width: 79px; }
.w82 { width: 82px; }
.w84 { width: 84px; }
.w110 { width: 110px; }
.w139 { width: 139px; }
.w141 { width: 141px; }
.w147 { width: 147px; }
.w157 { width: 157px; }
.w165 { width: 165px; }
.w168 { width: 168px; }
.w205 { width: 205px; }
.w231 { width: 231px; }
.w344 { width: 344px; }
.w409 { width: 409px; }

.patients {
    flex: 1;
}

.blank {
    flex: 1;
}

.pager {
    height: 18px;
    flex: none;
    display: flex;
    align-items: center;
    gap: 2px;
    padding-left: 4px;
    background-color: #f0f0f0;
}

.pager label {
    width: 36px;
}

.pager button {
    width: 22px;
    height: 15px;
    border: 1px solid #d0d0d0;
    border-radius: 4px;
    background-color: #fdfdfd;
}

.pager svg {
    display: block;
    width: 14px;
    height: 12px;
    margin: auto;
    fill: url(#blueArrow);
}

.pager button:disabled {
    background-color: #f7f7f7;
    border-color: #e4e4e4;
}

.pager button:disabled svg {
    fill: #8c8c8c;
}

.pager input {
    width: 43px;
    height: 16px;
    border: 1px solid #a0a0a8;
    background-color: #fff;
    text-align: right;
}

.pager input:disabled {
    background-color: #f0f0f0;
    color: #808080;
}

.pager .count {
    width: 22px;
    text-align: center;
}

.dash {
    width: 8px;
    height: 2px;
    margin-left: 16px;
    background-color: #888;
}

.btn {
    display: flex;
    align-items: center;
    justify-content: center;
    gap: 4px;
    border: 1px solid #cfcfcf;
    border-bottom-color: #b8b8b8;
    border-radius: 4px;
    background-color: #fdfdfd;
    white-space: nowrap;
    cursor: pointer;
}

.btn:disabled {
    background-color: #f7f7f7;
    border-color: #e2e2e2;
    color: #808080;
}

.btn:disabled svg {
    filter: grayscale(1);
    opacity: 0.8;
}

.btn svg {
    width: 16px;
    height: 18px;
    flex: none;
}

.refresh {
    height: 32px;
    flex: none;
    margin: 1px 0;
}

.search {
    height: 33px;
    flex: none;
    display: flex;
    align-items: center;
    padding-left: 6px;
    border: 1px solid #707070;
    border-right-color: #fff;
    border-bottom-color: #fff;
}

.search > label {
    width: 52px;
}

.combo {
    position: relative;
    display: block;
    height: 20px;
}

.combo select {
    width: 100%;
    height: 100%;
    padding: 0 2px;
    border: 1px solid #a5a6ac;
    background-color: #f0f0f0;
    appearance: none;
}

.combo::after {
    content: "";
    position: absolute;
    right: 5px;
    top: 6px;
    width: 5px;
    height: 5px;
    border: solid #666;
    border-width: 0 1px 1px 0;
    transform: rotate(45deg);
    pointer-events: none;
}

.combo::before {
    content: "";
    position: absolute;
    right: 1px;
    top: 1px;
    width: 15px;
    height: calc(100% - 2px);
    border: 1px solid #c8c8c8;
    border-radius: 2px;
    background-color: #fdfdfd;
    pointer-events: none;
}

.green {
    width: 62px;
}

.green select {
    background-color: #c0ffc0;
    color: #000;
}

.search-box {
    position: relative;
    width: 135px;
    height: 24px;
    margin-left: 1px;
}

.search-box input {
    width: 100%;
    height: 100%;
    border: 1px solid #a5a6ac;
    background-color: #fff;
}

.search-box button {
    position: absolute;
    right: 2px;
    top: 2px;
    width: 20px;
    height: 20px;
    border: 1px solid #ccc;
    border-radius: 3px;
    background-color: #fff;
}

.search-box svg {
    display: block;
    width: 18px;
    height: 18px;
}

.filters {
    flex: none;
    display: grid;
    grid-template-columns: 79px 85px 1fr;
    grid-auto-rows: 22px;
    align-items: center;
    height: 70px;
    margin: 8px 0 0;
    padding: 0 0 0 10px;
    border: 1px solid #d5dfe8;
    border-radius: 4px;
}

.filters label {
    display: flex;
    align-items: center;
    gap: 3px;
}

.filters input {
    width: 14px;
    height: 14px;
    flex: none;
    border: 1px solid #666;
    border-radius: 50%;
    appearance: none;
}

.filters input:checked {
    border: 4px solid #005fb8;
    background-color: #fff;
}

.filters input:disabled {
    border-color: #ccc;
}

.filters .off {
    color: #808080;
}

.filters a {
    justify-self: end;
    margin-right: 10px;
    color: #00f;
}

/* patient form */
.patient-info {
    min-inline-size: auto;
    height: 155px;
    flex: none;
    margin: 0 0 2px;
    padding: 0;
    border: 1px solid #d5dfe8;
    border-right: 0;
    border-radius: 4px 0 0 4px;
}

legend {
    margin-left: 6px;
    padding: 0 3px;
    color: #1e2a44;
    line-height: 14px;
}

.info-grid {
    display: grid;
    grid-template-columns: 71px 197px 72px 198px 167px;
    grid-auto-rows: 21px;
    gap: 2px 3px;
    justify-content: center;
    align-items: center;
}

.info-grid > label {
    text-align: right;
}

.fields {
    display: flex;
    align-items: center;
    gap: 2px;
    position: relative;
}

.fields input:not([type]) {
    height: 21px;
    padding: 0 2px;
    border: 1px solid #a5a6b4;
    box-shadow: inset 0 0 0 1px #fafafa;
    background-color: #f0f0f0;
}

.grow {
    flex: 1;
}

.fields label.grow {
    text-align: right;
    padding-right: 7px;
}

.third {
    margin-left: 3px;
}

.fields.third label.grow {
    text-align: left;
}

.f19 { width: 19px; }
.f30 { width: 30px; }
.f32 { width: 32px; }
.f34 { width: 34px; }
.f36 { width: 37px; }
.f49 { width: 49px; }
.f59 { width: 60px; }
.f62 { width: 62px; }
.f78 { width: 78px; }
.f80 { width: 81px; }
.f82 { width: 82px; }
.f86 { width: 86px; }
.f134 { width: 134px; }

.fields input.name {
    color: #00f;
    font-size: 12px;
    font-weight: bold;
}

.card input {
    color: #00f;
    font-weight: bold;
}

.fields input.center {
    text-align: center;
}

.fields input.red {
    color: #f00;
    font-size: 12px;
}

.ks {
    margin-left: 15px;
}

.newborn {
    display: flex;
    align-items: center;
    gap: 5px;
    margin-left: 3px;
    color: #f00;
    font-size: 12px;
    font-weight: bold;
}

.newborn input {
    width: 13px;
    height: 13px;
    border: 1px solid #555;
    border-radius: 3px;
    background-color: #f6f6f6;
    appearance: none;
}

.bank input {
    text-align: right;
    color: #1e2a44;
}

.bank svg {
    position: absolute;
    right: 60px;
    top: 3px;
    width: 16px;
    height: 16px;
}

.qr svg {
    position: absolute;
    right: 4px;
    top: 4px;
    width: 12px;
    height: 12px;
}

.qr-link {
    grid-column: 2 / -1;
    height: 20px;
    margin-top: 3px;
    padding: 2px;
    border: 1px solid #d5d5e0;
    border-left-color: #a5a6ac;
    background-color: #fff;
    color: #000080;
    font-weight: bold;
    text-decoration: none;
}

/* prescription and test tables */
.drugs {
    flex: 1;
    min-height: 0;
    border-right: 0;
}

.drugs table {
    flex: 1;
}

.drugs tbody td {
    height: auto;
    border: 0;
}

.drugs tfoot td,
.totals td {
    height: 20px;
    border-top: 2px solid #b8b8b8;
}

.totals td {
    padding-top: 1px;
}

.tests {
    flex: none;
    margin-top: 3px;
    border-right: 0;
}

.test-area {
    display: flex;
}

.test-tables {
    flex: 1;
    min-width: 0;
}

.test-rows {
    height: 105px;
    overflow: hidden;
}

.scrollbar {
    width: 17px;
    padding: 28px 0 0 8px;
    background-color: #f0f0f0;
}

.scrollbar i {
    display: block;
    width: 2px;
    height: 46px;
    background-color: #858585;
}

.test-rows td:nth-child(5),
.test-rows td:nth-child(6) {
    text-align: center;
}

.test-rows td:nth-child(n+7) {
    text-align: right;
    padding-right: 5px;
}

.test-rows td:first-child {
    border-bottom: 0;
    background-color: #fafafa;
}

.lime td {
    background-color: #c0ffc0;
}

td.pink {
    background-color: #ffc0ff;
}

/* bottom buttons */
.actions {
    position: relative;
    height: 72px;
    flex: none;
    margin-top: 8px;
    padding-top: 7px;
    border: 1px solid #d5dfe8;
    border-right: 0;
    border-radius: 4px 0 0 4px;
}

.counter {
    position: absolute;
    left: 319px;
    top: 13px;
    width: 18px;
    border-bottom: 1px solid #999;
    text-align: center;
    line-height: 16px;
}

.action-grid {
    display: grid;
    grid-template-columns: 117px 97px 116px 98px 98px;
    grid-template-rows: 28px 28px;
    gap: 3px 4px;
    justify-content: center;
    padding-left: 5px;
}

.undo {
    gap: 6px;
}

.primary {
    grid-column: span 2;
    font-weight: bold;
}

.total {
    margin-top: -6px;
}

.total label {
    display: block;
    color: #00f;
    font-weight: bold;
}

.total input {
    width: 100%;
    height: 20px;
    padding: 0 2px;
    border: 1px solid #a5a6b4;
    background-color: #f0f0f0;
    color: #f00;
    font-weight: bold;
    text-align: right;
}

/* status bar */
.statusbar {
    height: 23px;
    flex: none;
    display: flex;
    align-items: center;
    border-bottom: 1px solid #c4c4c4;
    background-color: #f0f0f0;
}

.cell {
    display: flex;
    align-items: center;
    gap: 4px;
    height: 20px;
    padding-top: 2px;
    border-right: 1px solid #cfcfcf;
}

.cell svg {
    width: 16px;
    height: 16px;
}

.month {
    width: 185px;
    padding-left: 22px;
}

.user {
    flex: 1;
    justify-content: center;
}

.version {
    width: 95px;
    justify-content: center;
}

.rights {
    width: 274px;
    justify-content: center;
}

.grip {
    align-self: flex-end;
    width: 12px;
    height: 7px;
    border-bottom: 2px dotted #b8b8b8;
}

/* taskbar */
.taskbar {
    height: 29px;
    flex: none;
    display: grid;
    grid-template-columns: 1fr auto 1fr;
    align-items: center;
    background-color: #eee;
}

.task-icons {
    grid-column: 2;
    display: flex;
    gap: 10px;
    padding-left: 5px;
}

.task-icons > * {
    width: 20px;
    height: 20px;
}

.mr {
    border-radius: 3px;
    background-color: #1b1b1f;
    color: #eee;
    font-weight: bold;
    line-height: 20px;
    text-align: center;
}

.mr b {
    color: #2a6fe0;
    font-size: 9px;
}

.zalo {
    position: relative;
    border-radius: 5px;
    background-color: #fff;
    box-shadow: 0 0 0 2px #f0b8b4;
    color: #0068ff;
    font-size: 10px;
    line-height: 20px;
}

.zalo b {
    position: absolute;
    right: -5px;
    top: -2px;
    width: 15px;
    height: 15px;
    border-radius: 50%;
    background-color: #f00;
    color: #fff;
    font-weight: normal;
    line-height: 15px;
    text-align: center;
}

.tray {
    display: flex;
    justify-content: flex-end;
    align-items: center;
    gap: 16px;
    padding-right: 1px;
}

.tray > svg {
    width: 16px;
    height: 16px;
}

.tray .sound,
.tray .battery {
    margin-left: -8px;
}

.tray-app {
    position: relative;
    width: 30px;
    height: 22px;
    margin: 0 -7px;
    padding: 3px 7px;
    border-radius: 4px;
    background-color: #f8f8f8;
}

.tray-app svg {
    display: block;
    width: 16px;
    height: 16px;
}

.tray-app .cursor {
    position: absolute;
    left: 14px;
    top: 0;
    width: 12px;
    height: 19px;
}

.vkey {
    width: 16px;
    height: 16px;
    border: 1px solid #c33;
    background-color: #f7d5d5;
    color: #d02020;
    font-weight: bold;
    text-align: center;
}

.clock {
    width: 58px;
    font-family: "Open Sans", "Noto Sans", sans-serif;
    font-size: 12px;
    line-height: 15px;
    text-align: right;
}
```
